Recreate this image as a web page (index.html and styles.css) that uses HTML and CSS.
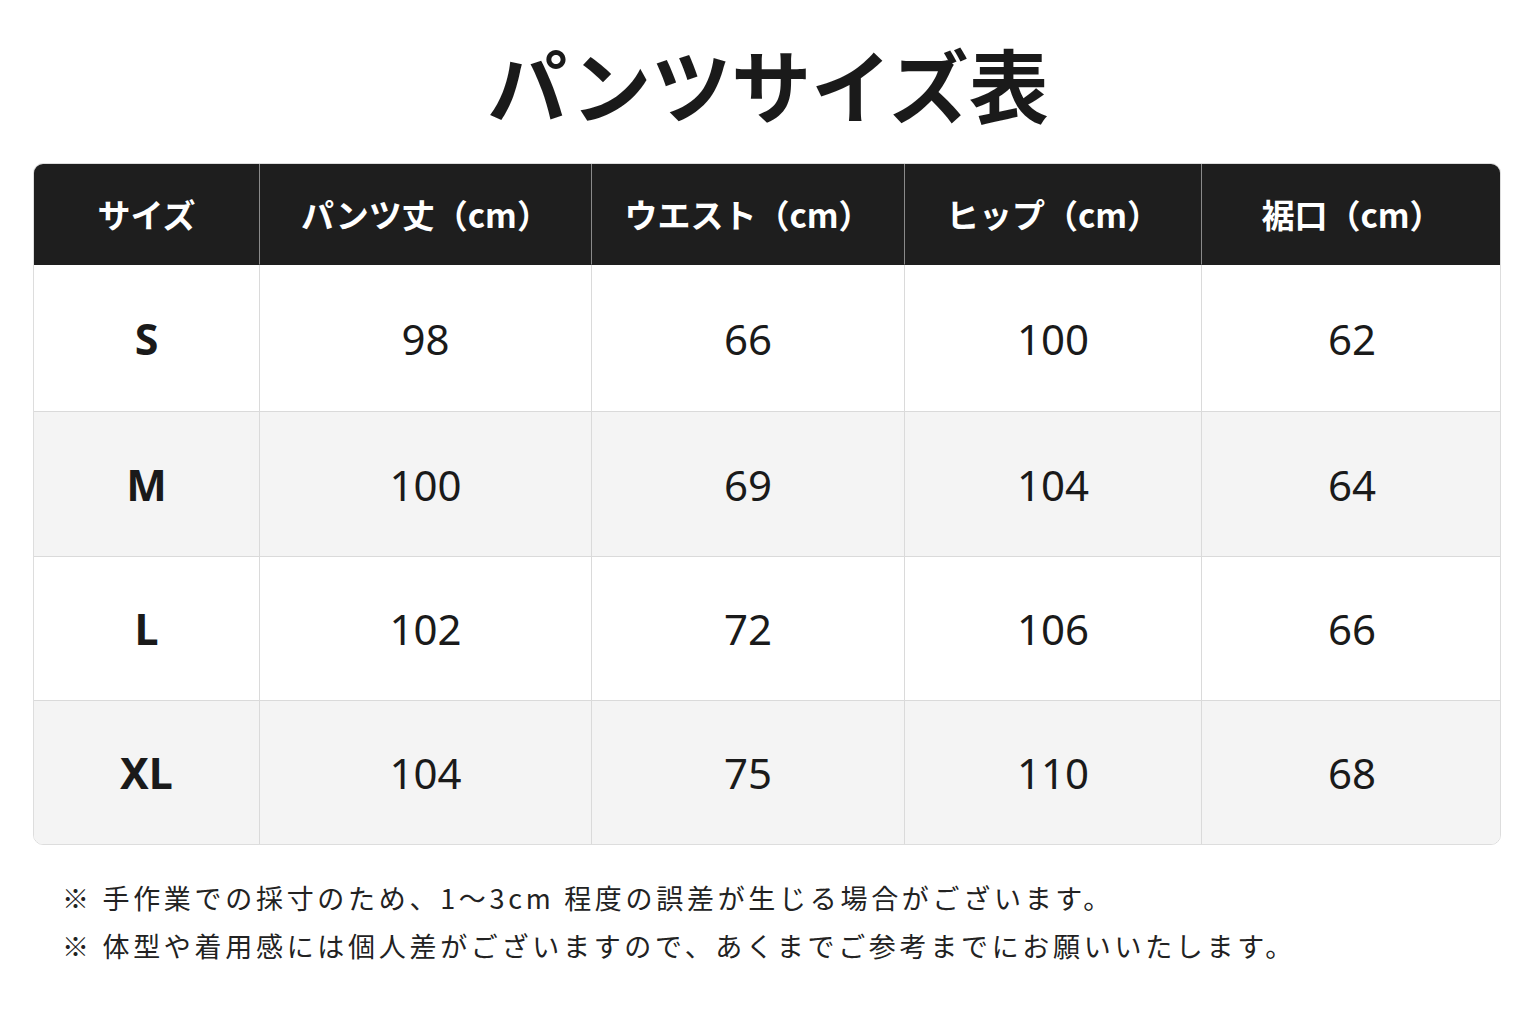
FILE: index.html
```html
<!DOCTYPE html>
<html lang="ja">
<head>
<meta charset="utf-8">
<title>パンツサイズ表</title>
<link rel="stylesheet" href="styles.css">
</head>
<body>
<main class="page">
  <h1 class="title">パンツサイズ表</h1>
  <div class="size-table">
    <div class="cell head">サイズ</div>
    <div class="cell head">パンツ丈（cm）</div>
    <div class="cell head">ウエスト（cm）</div>
    <div class="cell head">ヒップ（cm）</div>
    <div class="cell head last-col">裾口（cm）</div>

    <div class="cell size">S</div>
    <div class="cell">98</div>
    <div class="cell">66</div>
    <div class="cell">100</div>
    <div class="cell last-col">62</div>

    <div class="cell size alt">M</div>
    <div class="cell alt">100</div>
    <div class="cell alt">69</div>
    <div class="cell alt">104</div>
    <div class="cell alt last-col">64</div>

    <div class="cell size">L</div>
    <div class="cell">102</div>
    <div class="cell">72</div>
    <div class="cell">106</div>
    <div class="cell last-col">66</div>

    <div class="cell size alt last-row">XL</div>
    <div class="cell alt last-row">104</div>
    <div class="cell alt last-row">75</div>
    <div class="cell alt last-row">110</div>
    <div class="cell alt last-row last-col">68</div>
  </div>
  <div class="notes">
    <p class="note">※ 手作業での採寸のため、1～3cm 程度の誤差が生じる場合がございます。</p>
    <p class="note">※ 体型や着用感には個人差がございますので、あくまでご参考までにお願いいたします。</p>
  </div>
</main>
</body>
</html>
```

FILE: styles.css
```css
html, body {
  margin: 0;
  padding: 0;
  background: #ffffff;
}

body {
  font-family: "Noto Sans CJK JP", "Noto Sans", sans-serif;
  color: #1c1c1c;
}

.page {
  width: 1536px;
  height: 1024px;
  display: flex;
  flex-direction: column;
  align-items: center;
}

.title {
  margin: 42px 0 0 0;
  font-size: 80px;
  line-height: 80px;
  font-weight: 700;
  color: #1a1a1a;
  letter-spacing: 0;
}

.size-table {
  margin-top: 41px;
  width: 1468px;
  display: grid;
  grid-template-columns: 226px 332px 313px 297px 300px;
  grid-template-rows: 101px 147px 145px 144px 143px;
  border: 1px solid #dddddd;
  border-radius: 10px;
  overflow: hidden;
  box-sizing: border-box;
  transform: translateX(-1px);
}

.cell {
  display: flex;
  align-items: center;
  justify-content: center;
  background: #ffffff;
  border-right: 1px solid #dadada;
  border-bottom: 1px solid #dadada;
  font-family: "Noto Sans", "Noto Sans CJK JP", sans-serif;
  font-size: 42px;
  font-weight: 400;
  color: #1a1a1a;
}

.cell.alt {
  background: #f4f4f4;
}

.cell.head {
  font-family: "Noto Sans CJK JP", "Noto Sans", sans-serif;
  background: #1e1e1e;
  color: #ffffff;
  font-size: 33px;
  font-weight: 700;
  border-right-color: #8a8a8a;
  border-bottom-color: #1e1e1e;
}

.cell.size {
  font-weight: 700;
  font-size: 43px;
}

.cell.last-col {
  border-right: none;
}

.cell.last-row {
  border-bottom: none;
}

.notes {
  align-self: flex-start;
  margin: 29px 0 0 62px;
}

.note {
  margin: 0;
  font-size: 27px;
  line-height: 48px;
  letter-spacing: 3.7px;
  color: #222222;
}
```
